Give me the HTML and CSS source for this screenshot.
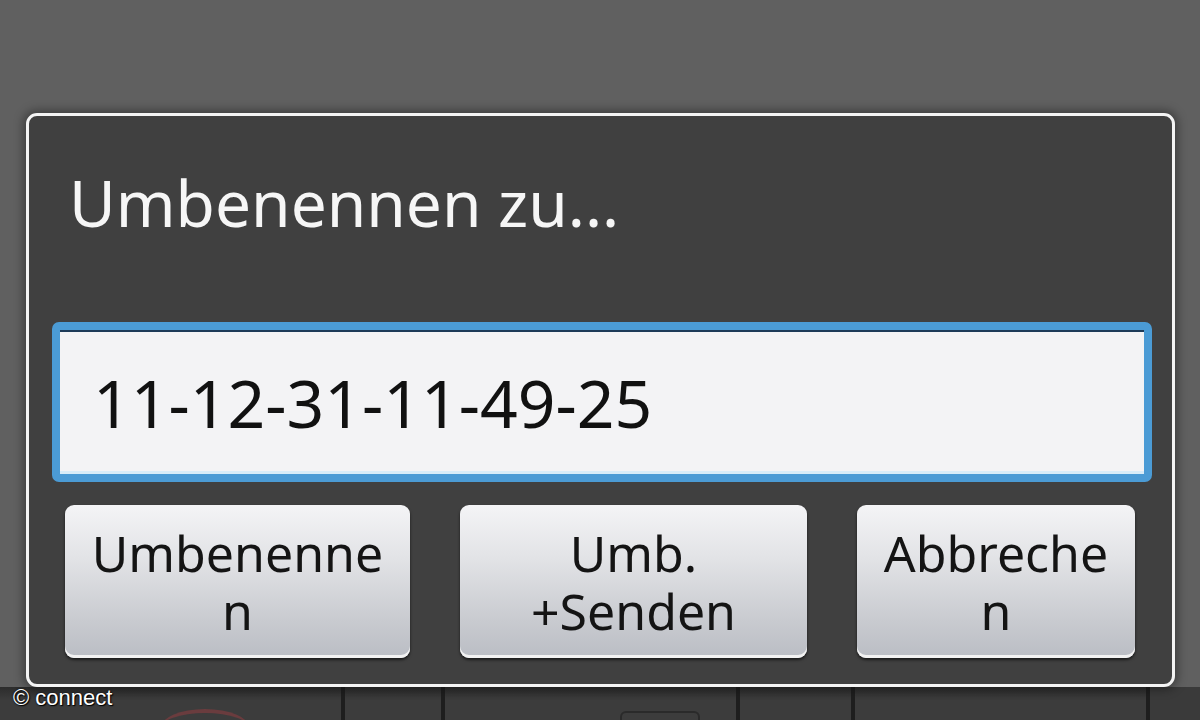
FILE: index.html
```html
<!DOCTYPE html>
<html lang="de">
<head>
<meta charset="utf-8">
<title>Umbenennen zu...</title>
<link rel="stylesheet" href="styles.css">
</head>
<body>
<div class="screen">
  <div class="dialog">
    <h1 class="title">Umbenennen zu...</h1>
    <div class="field"><span class="field-text">11-12-31-11-49-25</span></div>
    <div class="buttons">
      <button class="btn">Umbenennen</button>
      <button class="btn">Umb. +Senden</button>
      <button class="btn">Abbrechen</button>
    </div>
  </div>
  <div class="keys">
    <div class="key key-a"><span class="call"></span></div>
    <div class="key key-b"></div>
    <div class="key key-c"><span class="knob"></span></div>
    <div class="key key-d"></div>
    <div class="key key-e"></div>
  </div>
  <div class="watermark">© connect</div>
</div>
</body>
</html>
```
FILE: styles.css
```css
* { box-sizing: border-box; }
html, body { margin: 0; padding: 0; }
body {
  width: 1200px;
  height: 720px;
  overflow: hidden;
  background: #606060;
  font-family: "Noto Sans", "Open Sans", sans-serif;
}
.screen {
  position: relative;
  width: 1200px;
  height: 720px;
  display: flex;
  flex-direction: column;
  padding-top: 113px;
}
.dialog {
  position: relative;
  z-index: 1;
  margin-left: 26px;
  width: 1149px;
  height: 574px;
  background: #404040;
  border: 3px solid #f4f4f4;
  border-radius: 11px;
  box-shadow: 0 0 10px 3px rgba(0, 0, 0, 0.35);
  padding: 49px 20px 26px 23px;
  display: flex;
  flex-direction: column;
}
.title {
  margin: 0 0 0 17px;
  font-weight: normal;
  font-size: 64px;
  line-height: 76px;
  color: #f6f6f6;
  letter-spacing: 0;
}
.field {
  margin-top: 81px;
  height: 160px;
  border: 8px solid #4b9bd5;
  border-radius: 7px;
  background: #f3f3f5;
  box-shadow: inset 0 2px 0 #1d3a58, inset 0 -3px 0 #d8ecf8;
  display: flex;
  align-items: center;
  padding-left: 33px;
}
.field-text {
  font-size: 66px;
  color: #111;
  line-height: 1;
}
.buttons {
  margin: 23px 35px 0 13px;
  display: grid;
  grid-template-columns: 345px 347px 278px;
  column-gap: 50px;
}
.btn {
  height: 153px;
  border: none;
  border-radius: 9px;
  background: linear-gradient(#f4f4f6 0%, #e2e3e6 35%, #c9cbd0 75%, #babdc4 100%);
  box-shadow: inset 0 -3px 0 #f2f2f2, 0 2px 3px rgba(0, 0, 0, 0.6);
  font-family: "Noto Sans", "Open Sans", sans-serif;
  font-size: 50px;
  line-height: 58px;
  color: #141414;
  padding: 0 21px;
  overflow-wrap: anywhere;
  text-align: center;
}
.keys {
  flex: 1;
  display: flex;
  background: #3a3a3a;
}
.key {
  position: relative;
  height: 100%;
  border-right: 4px solid #1e1e1e;
  background: linear-gradient(#2c2c2c, #3c3c3c 40%);
}
.key-a { width: 345px; }
.key-b { width: 100px; }
.key-c { width: 295px; }
.key-d { width: 115px; }
.key-e { width: 295px; }
.call {
  position: absolute;
  left: 160px;
  top: 22px;
  width: 90px;
  height: 40px;
  border-radius: 50%;
  border-top: 4px solid #6a3c3e;
}
.knob {
  position: absolute;
  left: 175px;
  top: 24px;
  width: 80px;
  height: 30px;
  border-radius: 6px;
  border: 2px solid #2a2a2a;
}
.watermark {
  position: absolute;
  z-index: 2;
  left: 13px;
  top: 685px;
  font-family: "Liberation Sans", Arial, sans-serif;
  font-size: 22px;
  color: #fff;
  text-shadow: 0 0 2px #000, 1px 1px 1px #000;
}
```
